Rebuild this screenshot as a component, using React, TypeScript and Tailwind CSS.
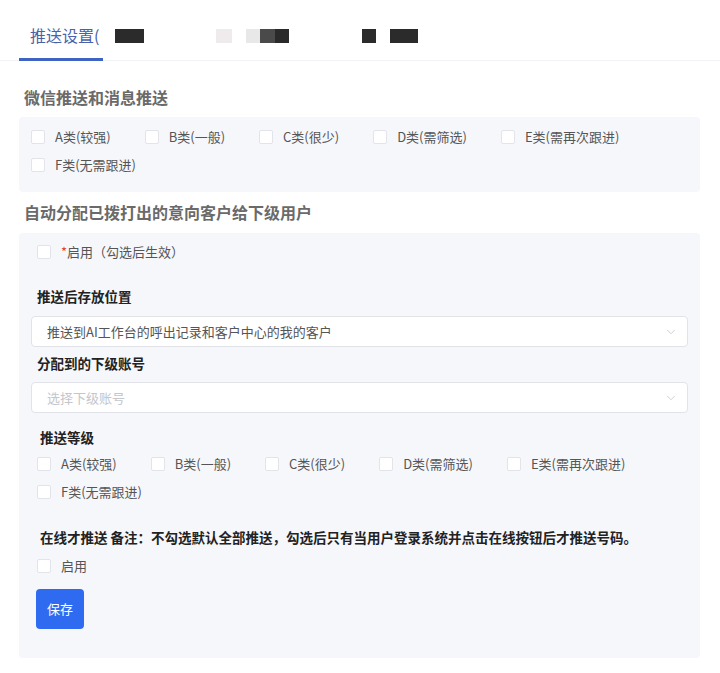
import React from "react";
import { ChevronDown } from "lucide-react";

const levels = ["A类(较强)", "B类(一般)", "C类(很少)", "D类(需筛选)", "E类(需再次跟进)", "F类(无需跟进)"];

const Box: React.FC = () => (
  <span className="inline-block h-[14px] w-[14px] shrink-0 rounded-[2px] border border-[#e3e4ea] bg-white" />
);

const CheckItem: React.FC<{ label: React.ReactNode }> = ({ label }) => (
  <label className="flex h-[28px] items-center gap-[10px] text-[13px] text-[#555]">
    <Box />
    <span>{label}</span>
  </label>
);

const LevelGroup: React.FC = () => (
  <div className="flex flex-wrap gap-x-[34px]">
    {levels.map((item) => (
      <CheckItem key={item} label={item} />
    ))}
  </div>
);

const Select: React.FC<{ value?: string; placeholder: string }> = ({ value, placeholder }) => (
  <div className="flex h-[31px] items-center justify-between rounded-[4px] border border-[#e2e3e8] bg-white pl-[15px] pr-[9px] text-[13px]">
    <span className={value ? "text-[#555]" : "text-[#c4c6cc]"}>{value ?? placeholder}</span>
    <ChevronDown size={14} strokeWidth={1.3} className="text-[#c2c4ca]" />
  </div>
);

const FieldLabel: React.FC<{ children: React.ReactNode; className?: string }> = ({ children, className }) => (
  <p className={`ml-[6px] text-[13.5px] font-bold leading-[20px] text-[#222] ${className ?? ""}`}>{children}</p>
);

const App: React.FC = () => {
  return (
    <div className="h-[673px] w-full bg-white font-['Noto_Sans_CJK_SC','Noto_Sans',sans-serif]">
      <div className="flex h-[61px] items-start border-b border-[#f2f3f6] pl-[19px]">
        <div className="h-[61px] border-b-[3px] border-[#3f63c2] pl-[11px] pr-[4px] pt-[24px] text-[16px] leading-[22px] text-[#4a62a8]">
          推送设置(
        </div>
        <div className="flex pt-[29px]">
          <span className="ml-[12px] h-[14px] w-[29px] bg-[#2b2b2b]" />
          <span className="ml-[72px] h-[14px] w-[16px] bg-[#efebec]" />
          <span className="ml-[14px] h-[14px] w-[14px] bg-[#e8e8e8]" />
          <span className="h-[14px] w-[15px] bg-[#4a4a4a]" />
          <span className="h-[14px] w-[14px] bg-[#2a2a2a]" />
          <span className="ml-[73px] h-[14px] w-[14px] bg-[#2b2b2b]" />
          <span className="ml-[14px] h-[14px] w-[28px] bg-[#2b2b2b]" />
        </div>
      </div>

      <h2 className="ml-[24px] mt-[25px] text-[16px] font-bold leading-[22px] text-[#6a6a6a]">微信推送和消息推送</h2>
      <div className="mx-[19px] mr-[20px] mt-[9px] rounded-[4px] bg-[#f6f7fb] pb-[13px] pl-[12px] pt-[6px]">
        <LevelGroup />
      </div>

      <h2 className="ml-[24px] mt-[9px] text-[16px] font-bold leading-[22px] text-[#6a6a6a]">
        自动分配已拨打出的意向客户给下级用户
      </h2>
      <div className="mx-[19px] mr-[20px] mt-[10px] flex flex-col rounded-[4px] bg-[#f6f7fb] px-[12px] pb-[29px] pt-[5px]">
        <div className="ml-[6px]">
          <CheckItem
            label={
              <>
                <span className="text-[#e0453a]">*</span>启用（勾选后生效）
              </>
            }
          />
        </div>

        <FieldLabel className="mt-[20px]">推送后存放位置</FieldLabel>
        <div className="mt-[10px]">
          <Select value="推送到AI工作台的呼出记录和客户中心的我的客户" placeholder="请选择" />
        </div>

        <FieldLabel className="mt-[6px]">分配到的下级账号</FieldLabel>
        <div className="mt-[9px]">
          <Select placeholder="选择下级账号" />
        </div>

        <FieldLabel className="ml-[9px] mt-[14px]">推送等级</FieldLabel>
        <div className="ml-[6px] mt-[3px]">
          <LevelGroup />
        </div>

        <p className="ml-[9px] mt-[21px] text-[13.5px] font-bold leading-[20px] text-[#222]">
          在线才推送 备注：不勾选默认全部推送，勾选后只有当用户登录系统并点击在线按钮后才推送号码。
        </p>
        <div className="ml-[6px] mt-[5px]">
          <CheckItem label="启用" />
        </div>

        <div className="mt-[9px]">
          <button className="ml-[5px] h-[40px] w-[48px] rounded-[4px] bg-[#2f6bf0] text-[13px] text-white">保存</button>
        </div>
      </div>
    </div>
  );
};

export default App;
